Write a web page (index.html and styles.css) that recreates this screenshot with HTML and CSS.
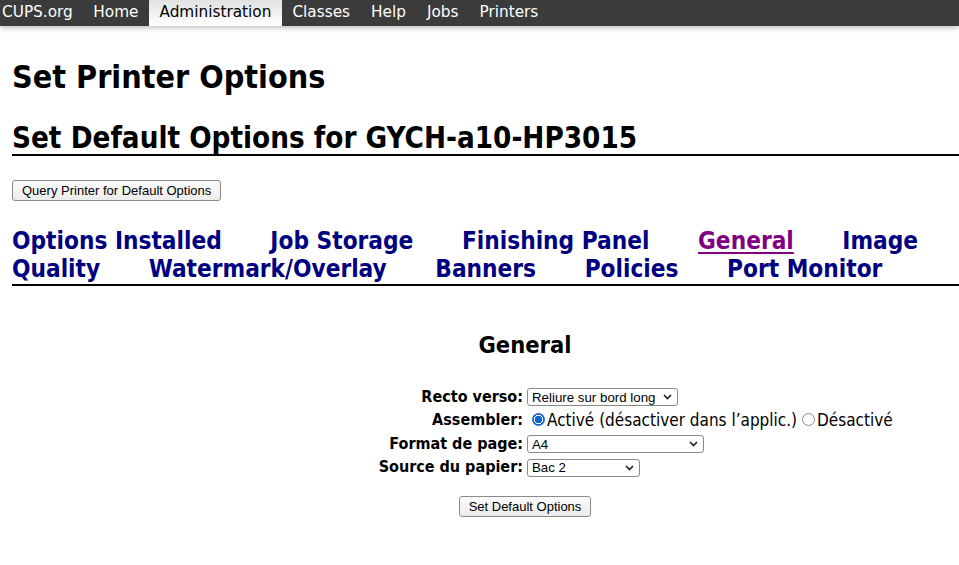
FILE: index.html
```html
<!DOCTYPE html>
<html lang="fr">
<head>
<meta charset="utf-8">
<title>Set Printer Options - CUPS</title>
<link rel="stylesheet" href="styles.css">
</head>
<body>
<div class="header">
  <ul class="nav">
    <li><a class="first" href="#">CUPS.org</a></li>
    <li><a href="#">Home</a></li>
    <li><a class="active" href="#">Administration</a></li>
    <li><a href="#">Classes</a></li>
    <li><a href="#">Help</a></li>
    <li><a href="#">Jobs</a></li>
    <li><a href="#">Printers</a></li>
  </ul>
</div>
<div class="body">
  <h1 class="page-title">Set Printer Options</h1>
  <h2 class="title">Set Default Options for GYCH-a10-HP3015</h2>
  <div class="query-row"><button class="btn" type="button">Query Printer for Default Options</button></div>
  <h2 class="title tabs">
    <span class="tabline"><a href="#">Options Installed</a><span class="sep"></span> <a href="#">Job Storage</a><span class="sep"></span> <a href="#">Finishing Panel</a><span class="sep"></span> <a class="current" href="#">General</a><span class="sep"></span> <a href="#">Image Quality</a><span class="sep"></span> <a href="#">Watermark/Overlay</a><span class="sep"></span> <a href="#">Banners</a><span class="sep"></span> <a href="#">Policies</a><span class="sep"></span> <a href="#">Port Monitor</a></span>
  </h2>
  <h3 class="section">General</h3>
  <table class="opts">
    <tr>
      <th>Recto verso:</th>
      <td><span class="sel w150"><select><option>Reliure sur bord long</option></select><svg class="chev" width="9" height="6" viewBox="0 0 9 6"><path d="M1 1 L4.5 4.5 L8 1" fill="none" stroke="#222" stroke-width="1.7"/></svg></span></td>
    </tr>
    <tr>
      <th>Assembler:</th>
      <td><span class="radios"><span class="radio on"></span><span class="rlabel">Activé (désactiver dans l’applic.)</span><span class="radio"></span><span class="rlabel">Désactivé</span></span></td>
    </tr>
    <tr>
      <th>Format de page:</th>
      <td><span class="sel w176"><select><option>A4</option></select><svg class="chev" width="9" height="6" viewBox="0 0 9 6"><path d="M1 1 L4.5 4.5 L8 1" fill="none" stroke="#222" stroke-width="1.7"/></svg></span></td>
    </tr>
    <tr>
      <th>Source du papier:</th>
      <td><span class="sel w112"><select><option>Bac 2</option></select><svg class="chev" width="9" height="6" viewBox="0 0 9 6"><path d="M1 1 L4.5 4.5 L8 1" fill="none" stroke="#222" stroke-width="1.7"/></svg></span></td>
    </tr>
  </table>
  <div class="submit"><button class="btn" type="button">Set Default Options</button></div>
</div>
</body>
</html>
```
FILE: styles.css
```css
html { overflow: hidden; }
body {
  margin: 0;
  font-family: "DejaVu Sans Condensed", "DejaVu Sans", sans-serif;
  color: #000;
  background: #fff;
}
.header {
  background: #3b3b3b;
  box-shadow: 0 2px 5px rgba(0,0,0,0.25);
  height: 26px;
}
.nav {
  list-style: none;
  margin: 0;
  padding: 0;
  display: flex;
}
.nav a {
  display: block;
  padding: 0 10.5px;
  height: 26px;
  line-height: 25px;
  font-family: "DejaVu Sans", sans-serif;
  font-size: 15.3px;
  color: #fff;
  text-decoration: none;
}
.nav a.first { padding-left: 2px; padding-right: 10px; }
.nav a.active {
  background: linear-gradient(rgba(255,255,255,.85), #fff);
  color: #000;
}
.body {
  width: 1026px;
  margin-left: 12px;
}
.page-title {
  font-size: 32px;
  margin: 31px 0 0;
  line-height: 40px;
}
.title {
  font-size: 29.3px;
  margin: 26px 0 0;
  line-height: 31px;
  border-bottom: 2px solid #000;
  padding-bottom: 0;
}
.query-row { margin-top: 24px; }
.btn {
  font-family: "Liberation Sans", Arial, sans-serif;
  font-size: 13px;
  color: #000;
  background: linear-gradient(#fbfbfb, #ececec);
  border: 1px solid #8a8a8a;
  border-radius: 3px;
  height: 21px;
  padding: 0 9px;
  margin: 0;
}
.tabs {
  margin-top: 26px;
  font-size: 24.2px;
  line-height: 28.3px;
  padding-bottom: 0;
}
.tabline { display: block; max-width: 940px; }
.tabs a { color: #000080; text-decoration: none; }
.tabs a.current { color: #800080; text-decoration: underline; text-underline-offset: 3px; }
.tabs .sep { display: inline-block; width: 41px; }
.section {
  text-align: center;
  font-size: 23.5px;
  margin: 43px 0 0;
  line-height: 32px;
}
.opts {
  width: 100%;
  margin-top: 23px;
  border-spacing: 2px;
}
.opts th {
  width: 50%;
  text-align: right;
  font-size: 16px;
  padding: 0 1px;
  height: 21.5px;
  white-space: nowrap;
}
.opts td {
  text-align: left;
  font-size: 16px;
  padding: 0 1px;
  white-space: nowrap;
}
.sel {
  position: relative;
  display: inline-block;
  vertical-align: middle;
}
.sel select {
  appearance: none;
  -webkit-appearance: none;
  font-family: "Liberation Sans", Arial, sans-serif;
  font-size: 13.3px;
  height: 18px;
  padding: 0 0 0 4px;
  border: 1px solid #8a8a8a;
  border-radius: 3px;
  background: #fff;
  color: #000;
  width: 100%;
  display: block;
}
.w150 { width: 151px; }
.w176 { width: 177px; }
.w112 { width: 113px; }
.chev {
  position: absolute;
  right: 6px;
  top: 6px;
  pointer-events: none;
}
.radios { display: flex; align-items: center; font-size: 17px; }
.radio {
  width: 11px;
  height: 11px;
  border: 1px solid #8a8a8a;
  border-radius: 50%;
  background: #fff;
  margin: 0 2px 0 5px;
  box-sizing: content-box;
  display: inline-block;
}
.radio.on {
  border-color: #0a66d8;
  background: radial-gradient(circle, #0a66d8 0 3.5px, #fff 4px 4.6px, #0a66d8 5px);
}
.submit {
  text-align: center;
  margin-top: 16px;
}
```
